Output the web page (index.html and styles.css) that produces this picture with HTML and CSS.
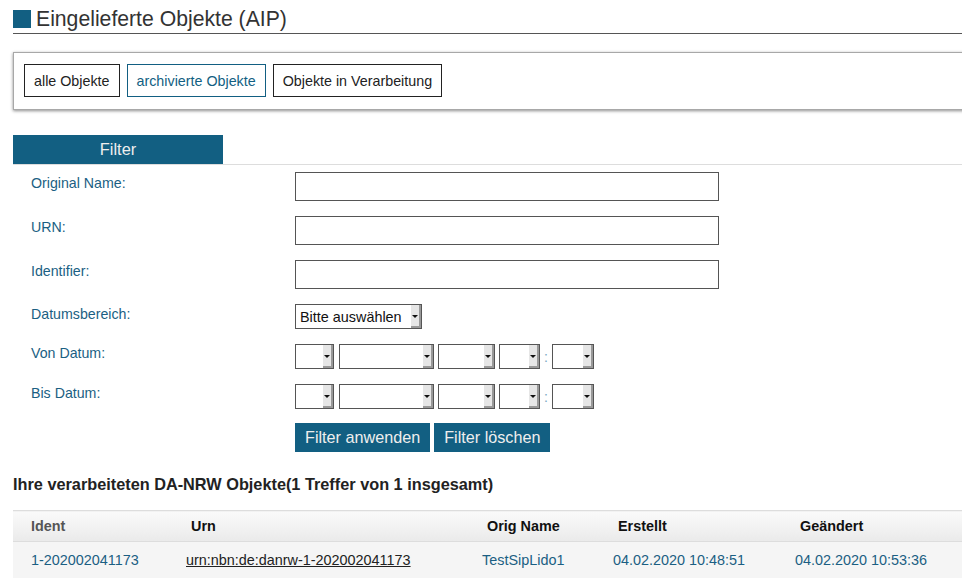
FILE: index.html
```html
<!DOCTYPE html>
<html lang="de">
<head>
<meta charset="utf-8">
<title>Eingelieferte Objekte (AIP)</title>
<link rel="stylesheet" href="styles.css">
</head>
<body>
<div class="page">
  <h1 class="title"><span class="title-mark"></span>Eingelieferte Objekte (AIP)</h1>

  <div class="tabs-box">
    <a class="tab-btn">alle Objekte</a>
    <a class="tab-btn active">archivierte Objekte</a>
    <a class="tab-btn">Objekte in Verarbeitung</a>
  </div>

  <div class="filter-head"><span class="filter-tab">Filter</span></div>

  <div class="filter-form">
    <label class="lbl">Original Name:</label>
    <div class="field"><input class="txt" type="text"></div>

    <label class="lbl">URN:</label>
    <div class="field"><input class="txt" type="text"></div>

    <label class="lbl">Identifier:</label>
    <div class="field"><input class="txt" type="text"></div>

    <label class="lbl lbl-sel">Datumsbereich:</label>
    <div class="field field-sel"><span class="sel sel-range">Bitte auswählen</span></div>

    <label class="lbl lbl-date">Von Datum:</label>
    <div class="field field-date">
      <span class="sel w-day"></span>
      <span class="sel w-month"></span>
      <span class="sel w-year"></span>
      <span class="sel w-hour"></span>
      <span class="colon">:</span>
      <span class="sel w-min"></span>
    </div>

    <label class="lbl lbl-date">Bis Datum:</label>
    <div class="field field-date">
      <span class="sel w-day"></span>
      <span class="sel w-month"></span>
      <span class="sel w-year"></span>
      <span class="sel w-hour"></span>
      <span class="colon">:</span>
      <span class="sel w-min"></span>
    </div>

    <div></div>
    <div class="field field-btns">
      <button class="btn">Filter anwenden</button>
      <button class="btn">Filter löschen</button>
    </div>
  </div>

  <h2 class="result-title">Ihre verarbeiteten DA-NRW Objekte(1 Treffer von 1 insgesamt)</h2>

  <table class="results">
    <colgroup>
      <col class="c1"><col class="c2"><col class="c3"><col class="c4"><col class="c5">
    </colgroup>
    <thead>
      <tr>
        <th class="th-ident">Ident</th>
        <th>Urn</th>
        <th>Orig Name</th>
        <th>Erstellt</th>
        <th>Geändert</th>
      </tr>
    </thead>
    <tbody>
      <tr>
        <td class="link">1-202002041173</td>
        <td class="urn">urn:nbn:de:danrw-1-202002041173</td>
        <td class="link">TestSipLido1</td>
        <td class="link">04.02.2020 10:48:51</td>
        <td class="link">04.02.2020 10:53:36</td>
      </tr>
    </tbody>
  </table>
</div>
</body>
</html>
```

FILE: styles.css
```css
html, body {
  margin: 0;
  padding: 0;
  background: #fff;
  overflow: hidden;
}
body {
  font-family: "Liberation Sans", Arial, sans-serif;
  color: #333;
}
.page {
  width: 990px;
  padding-left: 13px;
}
.title {
  margin: 0;
  padding-top: 5px;
  height: 28px;
  display: flex;
  align-items: center;
  font-size: 21.2px;
  font-weight: normal;
  color: #333;
  border-bottom: 1px solid #555;
  width: 949px;
}
.title-mark {
  width: 18px;
  height: 18px;
  background: #125f82;
  margin-right: 5px;
}
.tabs-box {
  margin-top: 18px;
  border: 1px solid #a8a8a8;
  box-shadow: 0 1px 3px rgba(0,0,0,0.45);
  display: flex;
  align-items: flex-start;
  gap: 7px;
  padding: 11px 0 0 10px;
  box-sizing: border-box;
  height: 58px;
}
.tab-btn {
  display: flex;
  align-items: center;
  height: 33px;
  padding: 0 9px;
  border: 1px solid #222;
  font-size: 14.3px;
  color: #222;
  box-sizing: border-box;
}
.tab-btn.active {
  border-color: #125f82;
  color: #125f82;
}
.filter-head {
  margin-top: 25px;
  border-bottom: 1px solid #ddd;
}
.filter-tab {
  display: flex;
  align-items: center;
  justify-content: center;
  width: 210px;
  height: 29px;
  background: #125f82;
  color: #eee;
  font-size: 16.4px;
}
.filter-form {
  display: grid;
  grid-template-columns: 282px 1fr;
  row-gap: 15px;
  margin-top: 7px;
}
.lbl {
  padding-left: 18px;
  padding-top: 3px;
  font-size: 14.2px;
  color: #1b5f83;
}
.lbl-sel { padding-top: 2px; }
.lbl-date { padding-top: 1px; }
.field { display: flex; align-items: center; gap: 4px; }
.txt {
  width: 424px;
  height: 29px;
  margin: 0;
  border: 1px solid #555;
  box-sizing: border-box;
  background: #fff;
}
.sel {
  position: relative;
  display: inline-flex;
  align-items: center;
  height: 25px;
  border: 1px solid #555;
  box-sizing: border-box;
  background: #fff;
  font-size: 14.4px;
  color: #111;
  padding-left: 4px;
}
.sel::before {
  content: "";
  position: absolute;
  top: 0;
  right: 0;
  bottom: 0;
  width: 10px;
  background: #e6e6e6;
  border-right: 2px solid #999;
  border-bottom: 2px solid #999;
  box-sizing: border-box;
}
.sel::after {
  content: "";
  position: absolute;
  right: 3px;
  top: 10px;
  border-left: 3px solid transparent;
  border-right: 3px solid transparent;
  border-top: 3px solid #111;
}
.sel-range { width: 127px; }
.field-date { gap: 4px; }
.w-day { width: 39px; }
.w-month { width: 95px; margin-left: 1px; }
.w-year { width: 57px; }
.w-hour { width: 41px; }
.w-min { width: 42px; }
.colon {
  color: #7aa9c4;
  font-size: 14px;
  margin: 0;
}
.field-btns { gap: 4px; margin-top: -1px; }
.btn {
  height: 29px;
  padding: 0 10px;
  border: 0;
  background: #125f82;
  color: #eee;
  font-family: "Liberation Sans", Arial, sans-serif;
  font-size: 16.2px;
  cursor: pointer;
}
.result-title {
  margin: 23px 0 0;
  font-size: 16.3px;
  font-weight: bold;
  color: #222;
}
.results {
  margin-top: 16px;
  width: 970px;
  border-collapse: collapse;
  table-layout: fixed;
  font-size: 14.4px;
}
.c1 { width: 155px; }
.c2 { width: 296px; }
.c3 { width: 131px; }
.c4 { width: 182px; }
.results th {
  text-align: left;
  height: 30px;
  padding: 0 0 0 23px;
  font-weight: bold;
  color: #111;
  background: linear-gradient(#fafafa, #eaeaea);
  border-top: 1px solid #ddd;
  border-bottom: 1px solid #ddd;
}
.results th.th-ident { padding-left: 18px; color: #555; }
.results td {
  height: 36px;
  padding: 0 0 0 18px;
  background: #f5f5f5;
  white-space: nowrap;
}
.results td.link { color: #1b5f83; }
.results td.urn { color: #222; text-decoration: underline; }
```
